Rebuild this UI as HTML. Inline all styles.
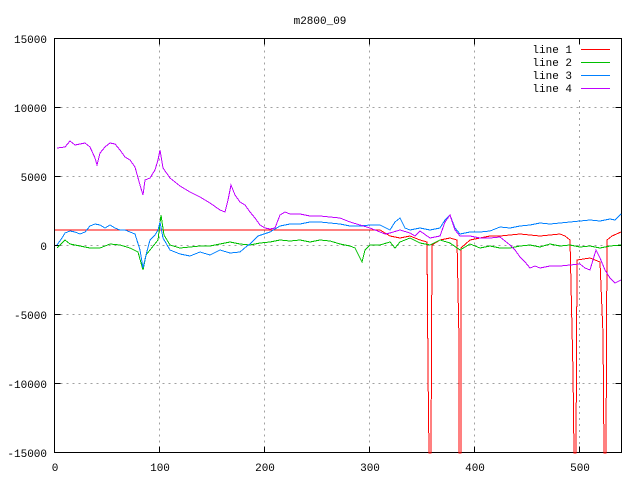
<!DOCTYPE html>
<html><head><style>
html,body{margin:0;padding:0;background:#fff;}
svg{display:block;}
text{font-family:"Liberation Mono","DejaVu Sans Mono",monospace;font-size:11px;fill:#000;}
</style></head><body>
<svg width="640" height="480" viewBox="0 0 640 480" xmlns="http://www.w3.org/2000/svg">
<rect width="640" height="480" fill="#fff"/>
<g stroke="#a0a0a0" stroke-width="1" stroke-dasharray="2,4" fill="none" shape-rendering="crispEdges">
<path d="M159.5 38.5V452.5M264.5 38.5V452.5M369.5 38.5V452.5M474.5 38.5V452.5M579.5 100V452.5"/>
<path d="M54.5 107.5H621.5M54.5 176.5H621.5M54.5 245.5H621.5M54.5 314.5H621.5M54.5 383.5H621.5"/>
</g>
<g stroke="#000" stroke-width="1" fill="none" shape-rendering="crispEdges">
<path d="M54.5 38.5H621.5V452.5H54.5Z"/>
<path d="M54.5 107.5h6M54.5 176.5h6M54.5 245.5h6M54.5 314.5h6M54.5 383.5h6M621.5 107.5h-6M621.5 176.5h-6M621.5 245.5h-6M621.5 314.5h-6M621.5 383.5h-6"/>
<path d="M159.5 452.5v-6M264.5 452.5v-6M369.5 452.5v-6M474.5 452.5v-6M579.5 452.5v-6M159.5 38.5v6M264.5 38.5v6M369.5 38.5v6M474.5 38.5v6M579.5 38.5v6"/>
</g>
<g fill="none" stroke-width="1" stroke-linejoin="miter" shape-rendering="crispEdges">
<polyline stroke="#ff0000" points="55,230 380,230 390,236 400,238 410,236 420,240 427,242 428,370 429,453 431,453 432,245 440,240 450,238 457,240 459,340 459,453 461,453 461,248 470,240 480,238 490,236 500,236 520,234 540,236 560,234 565,236 570,240 573,372 574,453 576,453 577,260 590,258 600,262 603,334 604,453 606,453 607,240 612,236 621,232"/>
<polyline stroke="#00c000" points="57,248 65,240 70,244 80,246 90,248 100,248 110,244 120,245 130,248 138,252 143,270 146,255 150,250 158,240 161,215 164,235 170,245 180,248 190,247 200,246 210,246 220,244 230,242 240,244 250,245 260,243 270,242 280,240 290,241 300,240 310,242 320,240 330,241 340,244 350,246 355,248 360,258 362,262 365,250 370,245 380,245 390,242 395,248 400,242 410,238 420,243 430,245 440,240 450,243 460,250 470,244 480,248 490,246 500,248 510,248 520,246 530,245 540,247 550,244 560,246 570,245 580,247 590,246 600,248 610,246 621,245"/>
<polyline stroke="#0080ff" points="57,245 62,238 65,233 70,231 75,232 80,234 85,232 90,226 95,224 100,225 105,228 110,225 115,228 120,230 125,230 135,234 140,250 143,268 146,255 150,240 155,235 158,230 160,222 163,238 170,250 180,254 190,256 200,252 210,255 220,250 230,253 240,252 247,246 250,244 258,236 270,232 280,226 290,224 300,224 310,222 320,222 330,223 340,224 350,226 360,226 370,225 380,225 390,230 395,222 400,218 405,228 410,230 420,228 430,230 440,228 445,220 450,215 455,228 460,234 470,232 480,232 490,231 500,227 510,228 520,226 530,225 540,223 550,224 560,223 570,222 580,221 590,220 600,221 610,219 615,220 621,214"/>
<polyline stroke="#c000ff" points="57,148 65,147 70,141 75,145 85,143 90,147 95,158 97,165 100,153 105,147 110,143 115,144 120,150 125,157 130,160 135,167 140,185 143,195 145,180 150,178 155,170 158,160 160,150 163,168 170,178 180,186 190,192 200,197 210,203 220,210 225,212 228,200 231,185 235,195 240,202 245,205 250,212 255,218 260,225 265,228 270,229 275,228 280,215 285,212 290,214 300,214 310,216 320,216 330,217 340,218 350,222 360,225 370,228 380,232 385,234 390,233 400,230 410,233 415,236 420,231 430,238 440,236 445,222 450,215 455,230 460,236 470,236 480,238 490,238 500,237 510,245 515,250 520,257 525,262 530,268 535,266 540,268 550,266 560,266 570,265 580,264 585,268 590,270 593,260 596,250 600,258 605,270 610,278 615,283 621,280"/>
</g>
<text x="320" y="24" text-anchor="middle">m2800_09</text>
<g text-anchor="end">
<text x="47" y="43">15000</text>
<text x="47" y="112">10000</text>
<text x="47" y="181">5000</text>
<text x="47" y="250">0</text>
<text x="47" y="319">-5000</text>
<text x="47" y="388">-10000</text>
<text x="47" y="457">-15000</text>
</g>
<g text-anchor="middle">
<text x="55" y="471">0</text>
<text x="160" y="471">100</text>
<text x="265" y="471">200</text>
<text x="370" y="471">300</text>
<text x="475" y="471">400</text>
<text x="580" y="471">500</text>
</g>
<g text-anchor="end">
<text x="572" y="53">line 1</text>
<text x="572" y="66">line 2</text>
<text x="572" y="79">line 3</text>
<text x="572" y="92">line 4</text>
</g>
<g stroke-width="1" shape-rendering="crispEdges">
<path d="M581 49.5H610" stroke="#ff0000"/>
<path d="M581 62.5H610" stroke="#00c000"/>
<path d="M581 75.5H610" stroke="#0080ff"/>
<path d="M581 88.5H610" stroke="#c000ff"/>
</g>
</svg>
</body></html>
